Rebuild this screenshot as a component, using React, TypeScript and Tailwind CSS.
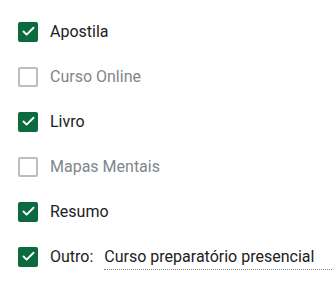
import { Check } from 'lucide-react';

type Item = { label: string; checked: boolean };

const items: Item[] = [
  { label: 'Apostila', checked: true },
  { label: 'Curso Online', checked: false },
  { label: 'Livro', checked: true },
  { label: 'Mapas Mentais', checked: false },
  { label: 'Resumo', checked: true },
];

function Box({ checked }: { checked: boolean }) {
  return checked ? (
    <span className="flex h-[20px] w-[20px] shrink-0 items-center justify-center rounded-[2px] bg-[#0b6b3e]">
      <Check className="h-[15px] w-[15px] text-white" strokeWidth={3} />
    </span>
  ) : (
    <span className="h-[20px] w-[20px] shrink-0 rounded-[2px] border-2 border-[#bdbdbd]" />
  );
}

export default function App() {
  return (
    <div className="w-[332px] h-[281px] bg-white pt-[9px] pl-[18px] font-['Roboto',sans-serif] text-[16px]">
      {items.map(item => (
        <div key={item.label} className="flex h-[45px] items-center gap-[12px]">
          <Box checked={item.checked} />
          <span className={item.checked ? 'text-[#202124]' : 'text-[#80868b]'}>{item.label}</span>
        </div>
      ))}
      <div className="flex h-[45px] items-center">
        <Box checked />
        <span className="ml-[12px] text-[#202124]">Outro:</span>
        <div className="ml-[11px] flex-1 border-b border-dotted border-[#80868b] pt-[2px] pb-[1px] leading-[22px] text-[#202124]">
          Curso preparatório presencial
        </div>
      </div>
    </div>
  );
}
